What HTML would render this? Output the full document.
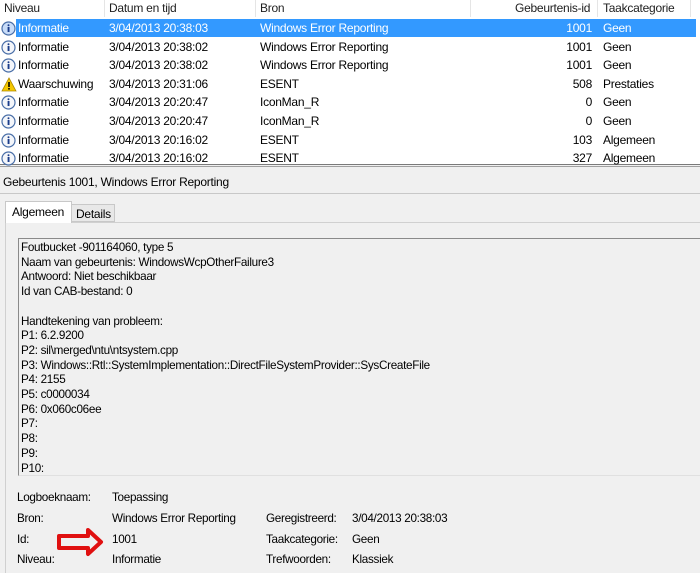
<!DOCTYPE html>
<html><head><meta charset="utf-8"><style>
*{margin:0;padding:0;box-sizing:border-box}
body{width:700px;height:573px;overflow:hidden;background:#f0f0f0;font-family:"Liberation Sans",sans-serif;font-size:12px;letter-spacing:-0.25px;color:#000;position:relative}
.a{position:absolute;white-space:nowrap}
#list{position:absolute;left:0;top:0;width:700px;height:165px;background:#fff;border-bottom:1px solid #7a7a7a}
.hd{position:absolute;top:0;height:18px;line-height:16px;color:#1e1e1e}
.sep{position:absolute;top:0;width:1px;height:17px;background:#e5e5e5}
.row{position:absolute;left:0;width:700px;height:18.6px;line-height:18px}
.sel{position:absolute;left:16px;width:680px;top:0;height:18px;background:#3399ff}
.row .a{top:0}
.row.s .a{color:#fff}
.tb{letter-spacing:-0.3px;font-size:11.7px}
</style></head><body>
<div id="list">
<div class="hd" style="left:4px">Niveau</div>
<div class="hd" style="left:109px">Datum en tijd</div>
<div class="hd" style="left:260px">Bron</div>
<div class="hd" style="left:515px">Gebeurtenis-id</div>
<div class="hd" style="left:603px">Taakcategorie</div>
<div class="sep" style="left:104px"></div><div class="sep" style="left:255px"></div><div class="sep" style="left:470px"></div><div class="sep" style="left:597px"></div><div class="sep" style="left:690px"></div>
</div>
<div class="a" style="left:0;top:166px;width:700px;height:1px;background:#a0a0a0"></div>
<div class="a" style="left:3px;top:175px">Gebeurtenis 1001, Windows Error Reporting</div>
<div class="a" style="left:0;top:193px;width:700px;height:1px;background:#c8c8c8"></div>
<div class="a" style="left:5px;top:222px;width:695px;height:351px;border-left:1px solid #d0d0d0;border-top:1px solid #d0d0d0"></div>
<div class="a" style="left:5px;top:201px;width:67px;height:22px;background:#fff;border:1px solid #c8c8c8;border-bottom:none"></div>
<div class="a" style="left:12px;top:205px">Algemeen</div>
<div class="a" style="left:72px;top:204px;width:43px;height:18px;background:#e8e8e8;border:1px solid #c8c8c8;border-left:none"></div>
<div class="a" style="left:76px;top:207px">Details</div>
<div class="a" style="left:18px;top:238px;width:682px;height:238px;border-left:1px solid #8a8a8a;border-top:1px solid #8a8a8a;border-bottom:1px solid #e0e0e0"></div>
<div class="a tb" style="left:21px;top:241px;line-height:14.7px">Foutbucket -901164060, type 5<br>Naam van gebeurtenis: WindowsWcpOtherFailure3<br>Antwoord: Niet beschikbaar<br>Id van CAB-bestand: 0<br><br>Handtekening van probleem:<br>P1: 6.2.9200<br>P2: sil\merged\ntu\ntsystem.cpp<br>P3: Windows::Rtl::SystemImplementation::DirectFileSystemProvider::SysCreateFile<br>P4: 2155<br>P5: c0000034<br>P6: 0x060c06ee<br>P7:<br>P8:<br>P9:<br>P10:</div>
<div class="tb">
<div class="a" style="left:17px;top:491px">Logboeknaam:</div><div class="a" style="left:112px;top:491px">Toepassing</div>
<div class="a" style="left:17px;top:512px">Bron:</div><div class="a" style="left:112px;top:512px">Windows Error Reporting</div>
<div class="a" style="left:266px;top:512px">Geregistreerd:</div><div class="a" style="left:352px;top:512px">3/04/2013 20:38:03</div>
<div class="a" style="left:17px;top:533px">Id:</div><div class="a" style="left:112px;top:533px">1001</div>
<div class="a" style="left:266px;top:533px">Taakcategorie:</div><div class="a" style="left:352px;top:533px">Geen</div>
<div class="a" style="left:17px;top:553px">Niveau:</div><div class="a" style="left:112px;top:553px">Informatie</div>
<div class="a" style="left:266px;top:553px">Trefwoorden:</div><div class="a" style="left:352px;top:553px">Klassiek</div>
</div>
<svg class="a" style="left:54px;top:526px" width="52" height="32"><path d="M5 10 H34 V4 L47 16 L34 28 V22 H5 Z" fill="none" stroke="#e01010" stroke-width="4" stroke-linejoin="round"/></svg>
<script>
var d=[["i","Informatie","3/04/2013 20:38:03","Windows Error Reporting","1001","Geen"],
["i","Informatie","3/04/2013 20:38:02","Windows Error Reporting","1001","Geen"],
["i","Informatie","3/04/2013 20:38:02","Windows Error Reporting","1001","Geen"],
["w","Waarschuwing","3/04/2013 20:31:06","ESENT","508","Prestaties"],
["i","Informatie","3/04/2013 20:20:47","IconMan_R","0","Geen"],
["i","Informatie","3/04/2013 20:20:47","IconMan_R","0","Geen"],
["i","Informatie","3/04/2013 20:16:02","ESENT","103","Algemeen"],
["i","Informatie","3/04/2013 20:16:02","ESENT","327","Algemeen"]];
var h="";
d.forEach(function(r,k){
var t=19+k*18.6;
var ic=r[0]=="i"?'<svg class="a" style="left:1px;top:2px" width="15" height="15"><circle cx="7.5" cy="7.5" r="6.5" fill="'+(k==0?'#c8dcf8':'#f4f6fa')+'" stroke="#4a6fa8" stroke-width="1.2"/><circle cx="7.5" cy="4.3" r="1" fill="#1a3c8a"/><rect x="6.6" y="6" width="1.9" height="5" fill="#1a3c8a"/></svg>'
:'<svg class="a" style="left:1px;top:2px" width="16" height="15"><path d="M8 1 L15 14 H1 Z" fill="#f5c800" stroke="#b08a00" stroke-width="0.8"/><rect x="7.2" y="5" width="1.6" height="5" fill="#000"/><rect x="7.2" y="11" width="1.6" height="1.6" fill="#000"/></svg>';
h+='<div class="row'+(k==0?' s':'')+'" style="top:'+t+'px">'+(k==0?'<div class="sel"></div>':'')+ic+
'<div class="a" style="left:18px">'+r[1]+'</div><div class="a" style="left:109px">'+r[2]+'</div><div class="a" style="left:260px">'+r[3]+'</div><div class="a" style="right:108px">'+r[4]+'</div><div class="a" style="left:603px">'+r[5]+'</div></div>';
});
document.getElementById("list").insertAdjacentHTML("beforeend",h);
</script>
</body></html>
